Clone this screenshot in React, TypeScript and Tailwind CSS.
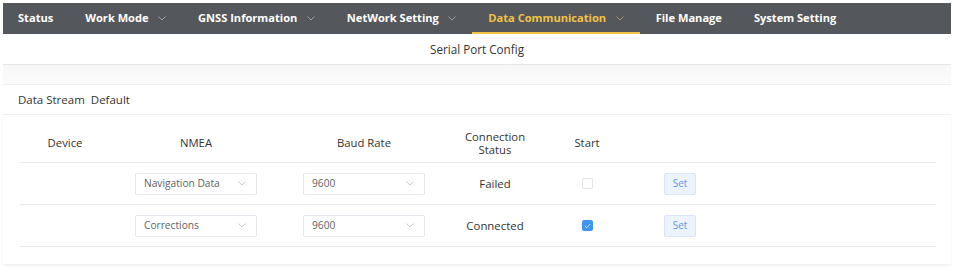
import React from "react";

const Chevron = ({ className = "" }: { className?: string }) => (
  <svg width="8" height="5" viewBox="0 0 8 5" className={className} fill="none">
    <path d="M0.5 0.5 L4 4 L7.5 0.5" stroke="currentColor" strokeWidth="1" />
  </svg>
);

const navItems = [
  { label: "Status", chevron: false },
  { label: "Work Mode", chevron: true },
  { label: "GNSS Information", chevron: true },
  { label: "NetWork Setting", chevron: true },
  { label: "Data Communication", chevron: true, active: true },
  { label: "File Manage", chevron: false },
  { label: "System Setting", chevron: false },
];

const Select = ({ value }: { value: string }) => (
  <div className="w-[122px] h-[22px] border border-[#e4e7ed] rounded-[2px] bg-white flex items-center justify-between pl-[8px] pr-[10px]">
    <span className="text-[10.2px] text-[#606266]">{value}</span>
    <Chevron className="text-[#c8cbd0]" />
  </div>
);

const SetBtn = () => (
  <div className="w-[32px] h-[22px] bg-[#ecf3fd] border border-[#d9e6f7] rounded-[2px] flex items-center justify-center text-[10px] text-[#5f97e0]">
    Set
  </div>
);

const cols = "grid grid-cols-[90px_172px_164px_98px_86px_100px_1fr]";

export default function App() {
  const rows = [
    { nmea: "Navigation Data", baud: "9600", status: "Failed", checked: false },
    { nmea: "Corrections", baud: "9600", status: "Connected", checked: true },
  ];
  return (
    <div
      className="w-[954px] h-[268px] bg-white p-[3px] overflow-hidden"
      style={{ fontFamily: '"Open Sans", "Noto Sans", sans-serif' }}
    >
      <div className="h-[31px] bg-[#54585d] flex items-stretch">
        {navItems.map((it) => (
          <div
            key={it.label}
            className={`flex items-center px-[16px] first:pl-[15px] pt-[2px] text-[11.1px] font-bold border-b-2 ${
              it.active ? "text-[#f2c244] border-[#f2c244]" : "text-white border-transparent"
            }`}
          >
            <span>{it.label}</span>
            {it.chevron && (
              <Chevron className={`ml-[9.5px] ${it.active ? "text-[#a99a6e]" : "text-[#9a9ea3]"}`} />
            )}
          </div>
        ))}
      </div>
      <div className="h-[31px] border-b border-[#e6e6e6] flex items-center justify-center pt-[1px] text-[11.7px] text-[#333]">
        Serial Port Config
      </div>
      <div className="h-[20px] bg-gradient-to-b from-[#f7f7f7] to-[#fbfbfb] border-b border-[#efefef]" />
      <div className="h-[30px] border-b border-[#f0f0f0] flex items-center pl-[15px] text-[11.5px] text-[#333]">
        <span>Data Stream</span>
        <span className="ml-[6px]">Default</span>
      </div>
      <div className="h-[149px] shadow-[0_2px_3px_rgba(0,0,0,0.06)] pl-[17px] pr-[15px]">
        <div className={`${cols} h-[48px] pt-[9px] border-b border-[#e8e8e8] items-center text-[11.3px] text-[#333] text-center`}>
          <div>Device</div>
          <div>NMEA</div>
          <div>Baud Rate</div>
          <div className="flex flex-col items-center leading-[13px]">
            <span>Connection</span>
            <span>Status</span>
          </div>
          <div>Start</div>
          <div />
          <div />
        </div>
        {rows.map((r) => (
          <div
            key={r.nmea}
            className={`${cols} h-[42px] border-b border-[#e8e8e8] items-center text-[11.4px] text-[#333]`}
          >
            <div />
            <div className="flex justify-center">
              <Select value={r.nmea} />
            </div>
            <div className="flex justify-center">
              <Select value={r.baud} />
            </div>
            <div className="text-center">{r.status}</div>
            <div className="flex justify-center">
              {r.checked ? (
                <div className="w-[11px] h-[11px] rounded-[2px] bg-[#3f95f2] flex items-center justify-center">
                  <svg width="7" height="6" viewBox="0 0 7 6" fill="none">
                    <path d="M0.8 3 L2.8 4.8 L6.2 1" stroke="#cfe3fb" strokeWidth="1" />
                  </svg>
                </div>
              ) : (
                <div className="w-[11px] h-[11px] rounded-[2px] border border-[#e2e4e8] bg-white" />
              )}
            </div>
            <div className="flex justify-center">
              <SetBtn />
            </div>
            <div />
          </div>
        ))}
      </div>
    </div>
  );
}
